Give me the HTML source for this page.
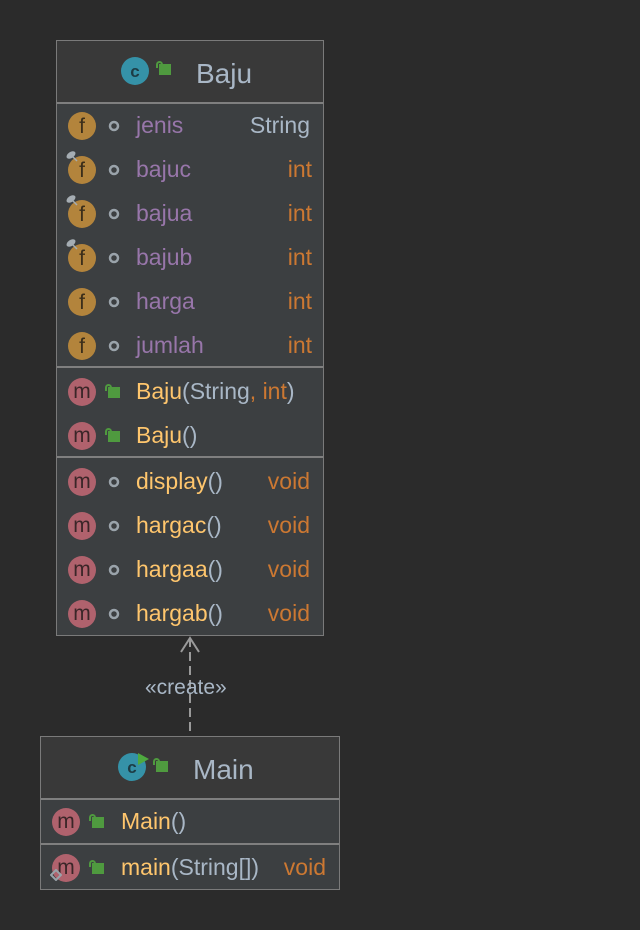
<!DOCTYPE html>
<html><head><meta charset="utf-8"><style>
body{margin:0;width:640px;height:930px;background:#2b2b2b;font-family:"Liberation Sans","DejaVu Sans",sans-serif;position:relative;overflow:hidden}
.box{position:absolute;border:1px solid #7a7a7a;background:#3c3f41;box-sizing:border-box}
.hdr{position:absolute;left:0;right:0;top:0;background:#393939;border-bottom:2px solid #7f7f7f}
.sep{position:absolute;left:0;right:0;height:2px;background:#7f7f7f}
.t{position:absolute;font-size:23px;line-height:24px;white-space:nowrap}
.ic{position:absolute}
.fn{color:#9876aa}.mt{color:#ffc66d}.pl{color:#a9b7c6}.kw{color:#cc7832}
</style></head><body>

<svg width="0" height="0" style="position:absolute">
<defs>
<g id="f"><circle cx="14" cy="14" r="14" fill="#b3843c"/><text x="14" y="21" font-family="Liberation Sans" font-size="21" fill="#3b2e1a" text-anchor="middle">f</text></g>
<g id="m"><circle cx="14" cy="14" r="14" fill="#b0626d"/><text x="14" y="20" font-family="Liberation Sans" font-size="21" fill="#3b2628" text-anchor="middle">m</text></g>
<g id="dot"><circle cx="6" cy="6" r="4" fill="none" stroke="#9aa3aa" stroke-width="2.5"/></g>
<g id="lock"><path d="M2 8 V4.5 a2.5 2.5 0 0 1 5 0" stroke="#4f9a3f" stroke-width="2" fill="none"/><rect x="4" y="4" width="12" height="11" fill="#4f9a3f"/></g>
<g id="pin"><ellipse cx="6" cy="4" rx="5" ry="3" transform="rotate(-35 6 4)" fill="#a5adb3"/><path d="M8 6 l4 4" stroke="#a5adb3" stroke-width="1.5"/></g>
</defs></svg>

<!-- Baju -->
<div class="box" style="left:56px;top:40px;width:268px;height:596px">
<div class="hdr" style="height:61px"></div>
<div class="sep" style="top:325px"></div>
<div class="sep" style="top:415px"></div>
</div>
<svg class="ic" style="left:121px;top:57px" width="28" height="28"><circle cx="14" cy="14" r="14" fill="#3592a8"/><text x="14" y="20" font-family="Liberation Sans" font-weight="bold" font-size="17" fill="#1d3c45" text-anchor="middle">c</text></svg>
<svg class="ic" style="left:155px;top:60px" width="18" height="18"><use href="#lock"/></svg>
<div class="t pl" style="left:196px;top:57px;font-size:28px;line-height:34px">Baju</div>

<!-- fields -->
<svg class="ic" style="left:68px;top:112px" width="28" height="28"><use href="#f"/></svg>
<svg class="ic" style="left:108px;top:120px" width="12" height="12"><use href="#dot"/></svg>
<div class="t fn" style="left:136px;top:113px">jenis</div><div class="t pl" style="right:330px;top:113px">String</div>

<svg class="ic" style="left:68px;top:156px" width="28" height="28"><use href="#f"/></svg>
<svg class="ic" style="left:65px;top:151px" width="14" height="14"><use href="#pin"/></svg>
<svg class="ic" style="left:108px;top:164px" width="12" height="12"><use href="#dot"/></svg>
<div class="t fn" style="left:136px;top:157px">bajuc</div><div class="t kw" style="right:328px;top:157px">int</div>

<svg class="ic" style="left:68px;top:200px" width="28" height="28"><use href="#f"/></svg>
<svg class="ic" style="left:65px;top:195px" width="14" height="14"><use href="#pin"/></svg>
<svg class="ic" style="left:108px;top:208px" width="12" height="12"><use href="#dot"/></svg>
<div class="t fn" style="left:136px;top:201px">bajua</div><div class="t kw" style="right:328px;top:201px">int</div>

<svg class="ic" style="left:68px;top:244px" width="28" height="28"><use href="#f"/></svg>
<svg class="ic" style="left:65px;top:239px" width="14" height="14"><use href="#pin"/></svg>
<svg class="ic" style="left:108px;top:252px" width="12" height="12"><use href="#dot"/></svg>
<div class="t fn" style="left:136px;top:245px">bajub</div><div class="t kw" style="right:328px;top:245px">int</div>

<svg class="ic" style="left:68px;top:288px" width="28" height="28"><use href="#f"/></svg>
<svg class="ic" style="left:108px;top:296px" width="12" height="12"><use href="#dot"/></svg>
<div class="t fn" style="left:136px;top:289px">harga</div><div class="t kw" style="right:328px;top:289px">int</div>

<svg class="ic" style="left:68px;top:332px" width="28" height="28"><use href="#f"/></svg>
<svg class="ic" style="left:108px;top:340px" width="12" height="12"><use href="#dot"/></svg>
<div class="t fn" style="left:136px;top:333px">jumlah</div><div class="t kw" style="right:328px;top:333px">int</div>

<!-- ctors -->
<svg class="ic" style="left:68px;top:378px" width="28" height="28"><use href="#m"/></svg>
<svg class="ic" style="left:104px;top:383px" width="18" height="18"><use href="#lock"/></svg>
<div class="t" style="left:136px;top:379px"><span class="mt">Baju</span><span class="pl">(String</span><span class="kw">, int</span><span class="pl">)</span></div>

<svg class="ic" style="left:68px;top:422px" width="28" height="28"><use href="#m"/></svg>
<svg class="ic" style="left:104px;top:427px" width="18" height="18"><use href="#lock"/></svg>
<div class="t" style="left:136px;top:423px"><span class="mt">Baju</span><span class="pl">()</span></div>

<!-- methods -->
<svg class="ic" style="left:68px;top:468px" width="28" height="28"><use href="#m"/></svg>
<svg class="ic" style="left:108px;top:476px" width="12" height="12"><use href="#dot"/></svg>
<div class="t" style="left:136px;top:469px"><span class="mt">display</span><span class="pl">()</span></div><div class="t kw" style="right:330px;top:469px">void</div>

<svg class="ic" style="left:68px;top:512px" width="28" height="28"><use href="#m"/></svg>
<svg class="ic" style="left:108px;top:520px" width="12" height="12"><use href="#dot"/></svg>
<div class="t" style="left:136px;top:513px"><span class="mt">hargac</span><span class="pl">()</span></div><div class="t kw" style="right:330px;top:513px">void</div>

<svg class="ic" style="left:68px;top:556px" width="28" height="28"><use href="#m"/></svg>
<svg class="ic" style="left:108px;top:564px" width="12" height="12"><use href="#dot"/></svg>
<div class="t" style="left:136px;top:557px"><span class="mt">hargaa</span><span class="pl">()</span></div><div class="t kw" style="right:330px;top:557px">void</div>

<svg class="ic" style="left:68px;top:600px" width="28" height="28"><use href="#m"/></svg>
<svg class="ic" style="left:108px;top:608px" width="12" height="12"><use href="#dot"/></svg>
<div class="t" style="left:136px;top:601px"><span class="mt">hargab</span><span class="pl">()</span></div><div class="t kw" style="right:330px;top:601px">void</div>

<!-- arrow -->
<svg class="ic" style="left:170px;top:636px" width="40" height="100"><path d="M20 2 V100" stroke="#9a9a9a" stroke-width="2" stroke-dasharray="9 5"/><path d="M11 16 L20 2 L29 16" stroke="#9a9a9a" stroke-width="2" fill="none"/></svg>
<div class="t pl" style="left:145px;top:676px;font-size:21px">«create»</div>

<!-- Main -->
<div class="box" style="left:40px;top:736px;width:300px;height:154px">
<div class="hdr" style="height:61px"></div>
<div class="sep" style="top:106px"></div>
</div>
<svg class="ic" style="left:118px;top:751px" width="32" height="30"><circle cx="14" cy="16" r="14" fill="#3592a8"/><text x="14" y="22" font-family="Liberation Sans" font-weight="bold" font-size="17" fill="#1d3c45" text-anchor="middle">c</text><path d="M20 2 L31 8 L20 14 Z" fill="#4eaa3f"/></svg>
<svg class="ic" style="left:152px;top:757px" width="18" height="18"><use href="#lock"/></svg>
<div class="t pl" style="left:193px;top:753px;font-size:28px;line-height:34px">Main</div>

<svg class="ic" style="left:52px;top:808px" width="28" height="28"><use href="#m"/></svg>
<svg class="ic" style="left:88px;top:813px" width="18" height="18"><use href="#lock"/></svg>
<div class="t" style="left:121px;top:809px"><span class="mt">Main</span><span class="pl">()</span></div>

<svg class="ic" style="left:52px;top:854px" width="28" height="28"><use href="#m"/></svg>
<svg class="ic" style="left:50px;top:869px" width="12" height="12"><path d="M6 1 L11 6 L6 11 L1 6 Z" fill="none" stroke="#9aa3aa" stroke-width="2"/></svg>
<svg class="ic" style="left:88px;top:859px" width="18" height="18"><use href="#lock"/></svg>
<div class="t" style="left:121px;top:855px"><span class="mt">main</span><span class="pl">(String[])</span></div><div class="t kw" style="right:314px;top:855px">void</div>

</body></html>
